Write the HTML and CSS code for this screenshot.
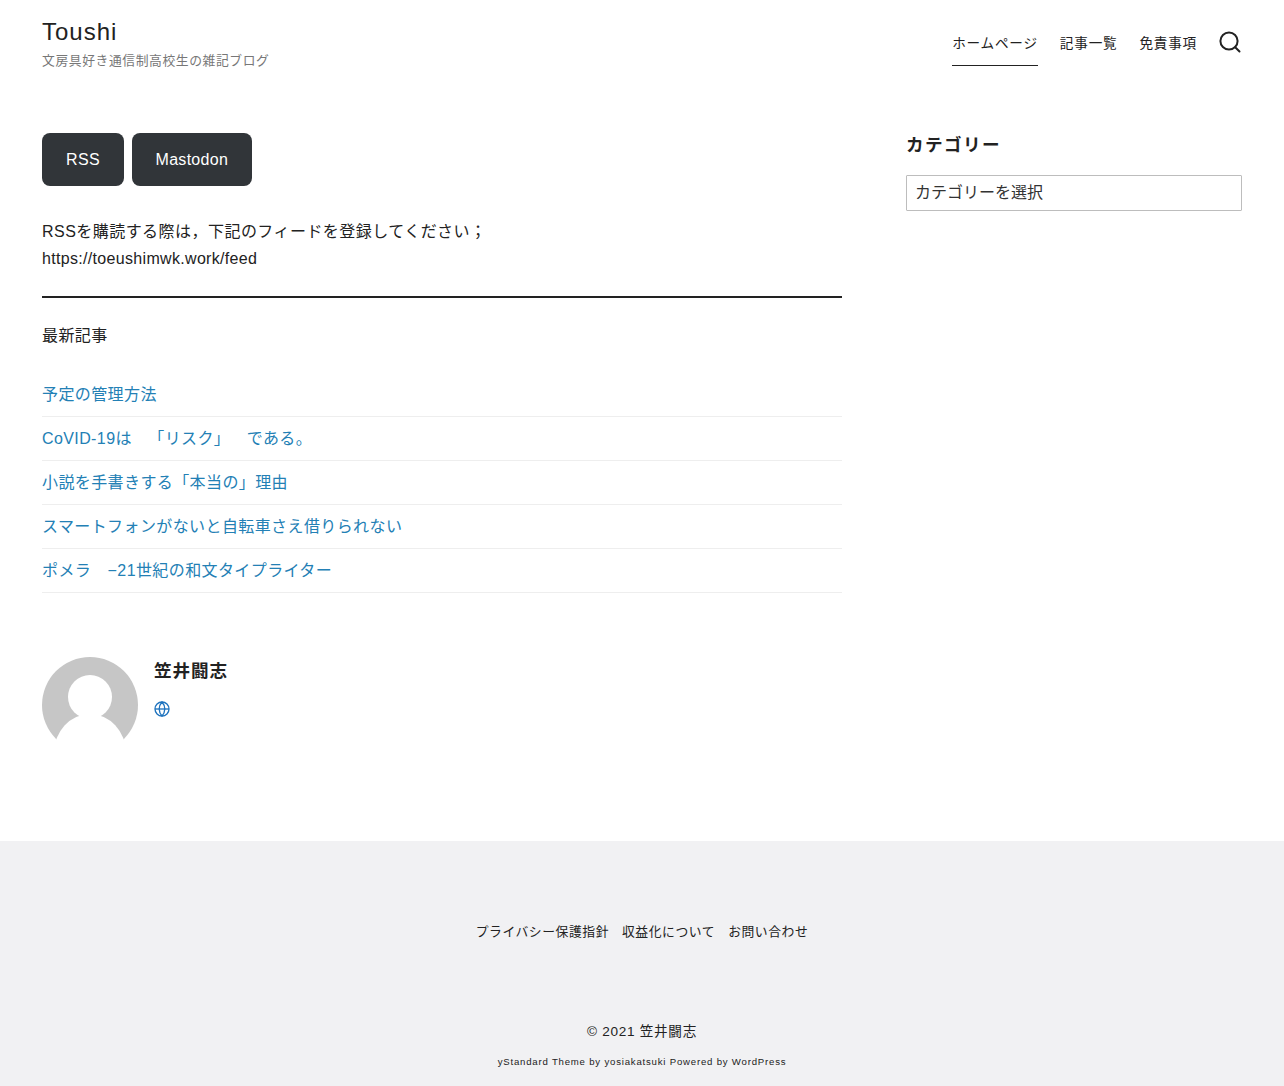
FILE: index.html
```html
<!DOCTYPE html>
<html lang="ja">
<head>
<meta charset="utf-8">
<title>Toushi</title>
<link rel="stylesheet" href="styles.css">
</head>
<body>
<header class="site-header">
  <div class="branding">
    <div class="site-title">Toushi</div>
    <div class="site-desc">文房具好き通信制高校生の雑記ブログ</div>
  </div>
  <nav class="global-nav">
    <a class="nav-item nav-current" href="#">ホームページ</a>
    <a class="nav-item" href="#">記事一覧</a>
    <a class="nav-item" href="#">免責事項</a>
    <svg class="search-icon" viewBox="0 0 24 24" width="24" height="24" fill="none" stroke="#222" stroke-width="2" stroke-linecap="round" stroke-linejoin="round"><circle cx="11" cy="11" r="8.6"/><line x1="21.5" y1="21.5" x2="17.2" y2="17.2"/></svg>
  </nav>
</header>
<div class="container">
  <main class="content">
    <div class="buttons">
      <a class="btn" href="#">RSS</a>
      <a class="btn" href="#">Mastodon</a>
    </div>
    <p class="feed-note">RSSを購読する際は，下記のフィードを登録してください；<br><span class="feed-url">https://toeushimwk.work/feed</span></p>
    <hr class="divider">
    <p class="latest-title">最新記事</p>
    <ul class="posts">
      <li><a href="#">予定の管理方法</a></li>
      <li><a href="#">CoVID-19は　「リスク」　である。</a></li>
      <li><a href="#">小説を手書きする「本当の」理由</a></li>
      <li><a href="#">スマートフォンがないと自転車さえ借りられない</a></li>
      <li><a href="#">ポメラ　−21世紀の和文タイプライター</a></li>
    </ul>
    <div class="author">
      <svg class="avatar" viewBox="0 0 96 96" width="96" height="96"><circle cx="48" cy="48" r="48" fill="#c6c6c6"/><g fill="#fff"><circle cx="48" cy="40" r="22"/><ellipse cx="48" cy="96" rx="36" ry="39"/></g></svg>
      <div class="author-info">
        <div class="author-name">笠井闘志</div>
        <svg class="globe" viewBox="0 0 24 24" width="16" height="16" fill="none" stroke="#1e73be" stroke-width="2"><circle cx="12" cy="12" r="10.5"/><line x1="1.5" y1="12" x2="22.5" y2="12"/><path d="M12 1.5a16 16 0 0 1 4.2 10.5A16 16 0 0 1 12 22.5 16 16 0 0 1 7.8 12 16 16 0 0 1 12 1.5z"/></svg>
      </div>
    </div>
  </main>
  <aside class="sidebar">
    <h2 class="widget-title">カテゴリー</h2>
    <select class="select"><option>カテゴリーを選択</option></select>
  </aside>
</div>
<footer class="site-footer">
  <nav class="footer-nav">
    <a href="#">プライバシー保護指針</a>
    <a href="#">収益化について</a>
    <a href="#">お問い合わせ</a>
  </nav>
  <div class="copyright">© 2021 笠井闘志</div>
  <div class="powered">yStandard Theme by yosiakatsuki Powered by WordPress</div>
</footer>
</body>
</html>
```
FILE: styles.css
```css
* { box-sizing: border-box; }
html, body { margin: 0; padding: 0; }
body {
  font-family: "Liberation Sans", "Noto Sans CJK JP", sans-serif;
  font-size: 16px;
  line-height: 1.7;
  letter-spacing: 0.4px;
  text-spacing-trim: space-all;
  color: #222;
  background: #fff;
}
a { color: inherit; text-decoration: none; }
.site-header {
  display: flex;
  justify-content: space-between;
  align-items: flex-start;
  height: 85px;
  padding: 0 42px;
}
.branding { padding-top: 16px; }
.site-title { font-size: 24px; line-height: 32px; letter-spacing: 1px; }
.site-desc { font-size: 12.8px; line-height: 25px; letter-spacing: 0.58px; color: #777; }
.global-nav { display: flex; align-items: flex-start; }
.nav-item {
  display: block;
  font-size: 13.6px;
  line-height: 23px;
  letter-spacing: 0.8px;
  padding: 32px 0 10px;
  margin-right: 22px;
  border-bottom: 1px solid transparent;
}
.nav-current { border-bottom-color: #222; }
.search-icon { margin-top: 30px; margin-left: -1px; }
.container {
  display: flex;
  justify-content: space-between;
  padding: 48px 42px 0;
  height: 756px;
}
.content { width: 800px; }
.sidebar { width: 336px; }
.buttons { display: flex; gap: 8px; }
.btn {
  display: block;
  min-width: 82px;
  background: #313539;
  color: #fff;
  border-radius: 8px;
  height: 53px;
  line-height: 53px;
  padding: 0 23.5px;
  text-align: center;
  letter-spacing: 0.3px;
}
.feed-note { margin: 32px 0 0; line-height: 27px; letter-spacing: 0.46px; }
.feed-url { letter-spacing: 0.32px; }
.divider { margin: 24px 0 0; border: 0; border-top: 2px solid #222; }
.latest-title { margin: 24px 0 0; line-height: 27px; }
.posts { list-style: none; margin: 24px 0 0; padding: 0; }
.posts li { height: 44px; line-height: 43px; border-bottom: 1px solid #eee; color: #2380b5; }
.author { display: flex; gap: 16px; margin-top: 64px; }
.avatar { display: block; }
.author-name { font-size: 17.6px; font-weight: 700; line-height: 28px; letter-spacing: 0.88px; }
.globe { display: block; margin-top: 16px; }
.widget-title { margin: 0; font-size: 17.6px; font-weight: 700; line-height: 24px; letter-spacing: 1.4px; }
.select {
  display: block;
  width: 100%;
  margin-top: 18px;
  height: 36px;
  border: 1px solid #bdbdbd;
  border-radius: 1px;
  padding: 0 8px;
  font: inherit;
  letter-spacing: 0;
  color: #333;
  background: #fff;
  appearance: none;
}
.site-footer { background: #f1f1f3; height: 245px; text-align: center; padding-top: 80px; }
.footer-nav { display: flex; justify-content: center; gap: 13px; font-size: 12.8px; line-height: 22px; letter-spacing: 0.56px; }
.copyright { margin-top: 77px; font-size: 13.6px; line-height: 23px; letter-spacing: 0.7px; }
.powered { margin-top: 11px; font-size: 9.6px; line-height: 16px; letter-spacing: 0.8px; }
```
